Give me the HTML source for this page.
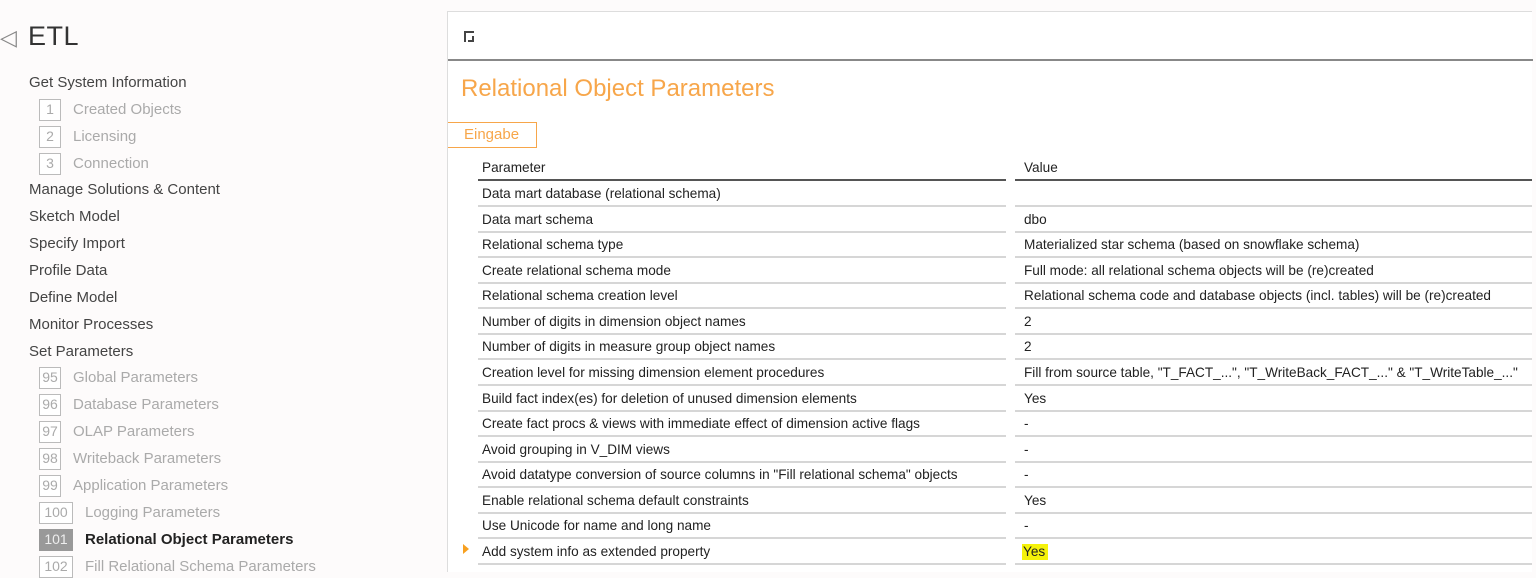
<!DOCTYPE html>
<html><head><meta charset="utf-8">
<style>
*{margin:0;padding:0;box-sizing:border-box}
body{width:1536px;height:572px;overflow:hidden;background:#fdfbfb;font-family:"Liberation Sans",sans-serif;position:relative;color:#333}
.a{position:absolute;white-space:nowrap}
.s{font-size:15px;color:#444;line-height:18px}
.g{color:#aaa}
.box{position:absolute;border:1.5px solid #bbb;height:22px;font-size:14px;color:#aaa;text-align:center;line-height:19px;background:#fff}
#panel{position:absolute;left:447px;top:11px;width:1085px;height:561px;background:#fff;border-left:1px solid #ddd;border-top:1px solid #ddd}
.r{position:absolute;font-size:13.6px;color:#222;line-height:16px}
.ln{position:absolute;height:2px;background:#d6d6d6}
</style></head><body>
<div class="a" style="left:0;top:25px;font-size:22px;color:#888">&#9665;</div>
<div class="a" style="left:28px;top:21px;font-size:27px;color:#333;letter-spacing:0.5px">ETL</div>

<div class="a s" style="left:29px;top:74px">Get System Information</div>
<div class="box" style="left:39px;top:99px;width:22px">1</div><div class="a s g" style="left:73px;top:101px">Created Objects</div>
<div class="box" style="left:39px;top:126px;width:22px">2</div><div class="a s g" style="left:73px;top:128px">Licensing</div>
<div class="box" style="left:39px;top:153px;width:22px">3</div><div class="a s g" style="left:73px;top:155px">Connection</div>
<div class="a s" style="left:29px;top:181px">Manage Solutions &amp; Content</div>
<div class="a s" style="left:29px;top:208px">Sketch Model</div>
<div class="a s" style="left:29px;top:235px">Specify Import</div>
<div class="a s" style="left:29px;top:262px">Profile Data</div>
<div class="a s" style="left:29px;top:289px">Define Model</div>
<div class="a s" style="left:29px;top:316px">Monitor Processes</div>
<div class="a s" style="left:29px;top:343px">Set Parameters</div>
<div class="box" style="left:39px;top:367px;width:22px">95</div><div class="a s g" style="left:73px;top:369px">Global Parameters</div>
<div class="box" style="left:39px;top:394px;width:22px">96</div><div class="a s g" style="left:73px;top:396px">Database Parameters</div>
<div class="box" style="left:39px;top:421px;width:22px">97</div><div class="a s g" style="left:73px;top:423px">OLAP Parameters</div>
<div class="box" style="left:39px;top:448px;width:22px">98</div><div class="a s g" style="left:73px;top:450px">Writeback Parameters</div>
<div class="box" style="left:39px;top:475px;width:22px">99</div><div class="a s g" style="left:73px;top:477px">Application Parameters</div>
<div class="box" style="left:39px;top:502px;width:34px">100</div><div class="a s g" style="left:85px;top:504px">Logging Parameters</div>
<div class="box" style="left:39px;top:529px;width:34px;background:#999;border-color:#999;color:#eee">101</div><div class="a s" style="left:85px;top:531px;font-weight:bold;color:#222">Relational Object Parameters</div>
<div class="box" style="left:39px;top:556px;width:34px">102</div><div class="a s g" style="left:85px;top:558px">Fill Relational Schema Parameters</div>

<div id="panel">
<div style="position:absolute;left:16px;top:19px;width:10px;height:11px;border-left:2px solid #444;border-top:2px solid #444"></div>
<div style="position:absolute;left:20px;top:24px;width:6px;height:6px;border-right:2px solid #444;border-bottom:2px solid #444"></div>
<div style="position:absolute;left:0;top:47px;width:1085px;height:2px;background:#888"></div>
<div class="a" style="left:13px;top:63px;font-size:24px;color:#f7a64a">Relational Object Parameters</div>
<div class="a" style="left:0;top:110px;width:89px;height:26px;border:1.5px solid #f7a64a;border-left:none;color:#f7a64a;font-size:15px;line-height:23px;padding-left:16px">Eingabe</div>
</div>

<div class="r" style="left:482px;top:160px">Parameter</div>
<div class="r" style="left:1024px;top:160px">Value</div>
<div class="ln" style="left:478px;top:179px;width:528px;background:#555"></div>
<div class="ln" style="left:1015px;top:179px;width:517px;background:#555"></div>

<div id="rows"></div>
<script>
var d=[["Data mart database (relational schema)",""],["Data mart schema","dbo"],["Relational schema type","Materialized star schema (based on snowflake schema)"],["Create relational schema mode","Full mode: all relational schema objects will be (re)created"],["Relational schema creation level","Relational schema code and database objects (incl. tables) will be (re)created"],["Number of digits in dimension object names","2"],["Number of digits in measure group object names","2"],["Creation level for missing dimension element procedures","Fill from source table, \"T_FACT_...\", \"T_WriteBack_FACT_...\" &amp; \"T_WriteTable_...\""],["Build fact index(es) for deletion of unused dimension elements","Yes"],["Create fact procs &amp; views with immediate effect of dimension active flags","-"],["Avoid grouping in V_DIM views","-"],["Avoid datatype conversion of source columns in \"Fill relational schema\" objects","-"],["Enable relational schema default constraints","Yes"],["Use Unicode for name and long name","-"],["Add system info as extended property","Yes"]];
var h="";
for(var i=0;i<d.length;i++){var y=186+i*25.57;
h+='<div class="r" style="left:482px;top:'+y+'px">'+d[i][0]+'</div>';
var v=d[i][1];
if(i==14)v='<span style="background:#f5f20a;padding:0 3px 1px 1px;margin-left:-2px">Yes</span>';
h+='<div class="r" style="left:1024px;top:'+y+'px">'+v+'</div>';
h+='<div class="ln" style="left:478px;top:'+(y+19)+'px;width:528px"></div>';
h+='<div class="ln" style="left:1015px;top:'+(y+19)+'px;width:517px"></div>';}
h+='<div class="a" style="left:463px;top:544px;width:0;height:0;border-left:6px solid #f7a020;border-top:5px solid transparent;border-bottom:5px solid transparent"></div>';
document.getElementById("rows").innerHTML=h;
</script>
</body></html>
